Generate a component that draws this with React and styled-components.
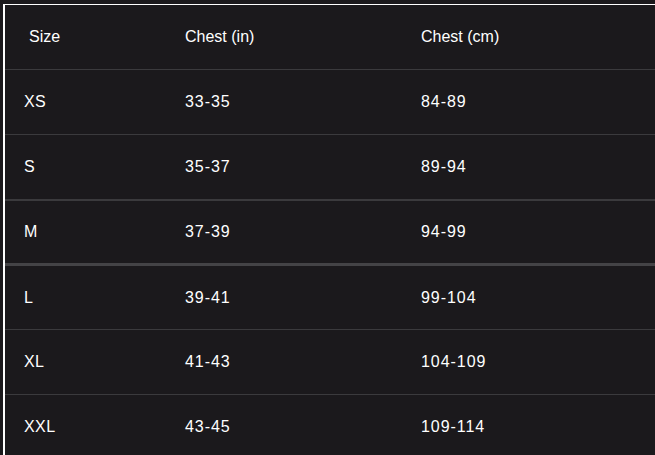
import React from "react";
import styled, { createGlobalStyle } from "styled-components";

const Global = createGlobalStyle`
  html, body {
    margin: 0;
    padding: 0;
    background: #1b191c;
    height: 100%;
    overflow: hidden;
  }
  body {
    font-family: "Liberation Sans", Arial, sans-serif;
  }
`;

const Frame = styled.div`
  margin: 4px 0 0 3px;
  border-top: 1px solid #ffffff;
  border-left: 2px solid #ffffff;
  height: 451px;
  box-sizing: border-box;
  background: #1b191c;
`;

const Row = styled.div`
  display: grid;
  grid-template-columns: 161px 236px 1fr;
  height: ${(p) => p.$h}px;
  border-bottom: ${(p) => p.$line}px solid ${(p) => (p.$line > 2 ? "#444346" : "#3b3a3d")};
  box-sizing: content-box;
`;

const Cell = styled.div`
  display: flex;
  align-items: center;
  padding-left: ${(p) => p.$indent || 19}px;
  color: #ffffff;
  font-size: 16px;
  line-height: 1;
  letter-spacing: ${(p) => (p.$num ? "0.95px" : p.$size ? "0.4px" : "0")};
`;

const header = ["Size", "Chest (in)", "Chest (cm)"];
const rows = [
  { s: "XS", i: "33-35", c: "84-89", h: 64, line: 1 },
  { s: "S", i: "35-37", c: "89-94", h: 64, line: 2 },
  { s: "M", i: "37-39", c: "94-99", h: 62, line: 3 },
  { s: "L", i: "39-41", c: "99-104", h: 63, line: 1 },
  { s: "XL", i: "41-43", c: "104-109", h: 64, line: 1 },
  { s: "XXL", i: "43-45", c: "109-114", h: 64, line: 0 },
];

export default function App() {
  return (
    <>
      <Global />
      <Frame>
        <Row $h={64} $line={1}>
          <Cell $indent={24}>{header[0]}</Cell>
          <Cell>{header[1]}</Cell>
          <Cell>{header[2]}</Cell>
        </Row>
        {rows.map((r) => (
          <Row key={r.s} $h={r.h} $line={r.line}>
            <Cell $size>{r.s}</Cell>
            <Cell $num>{r.i}</Cell>
            <Cell $num>{r.c}</Cell>
          </Row>
        ))}
      </Frame>
    </>
  );
}
